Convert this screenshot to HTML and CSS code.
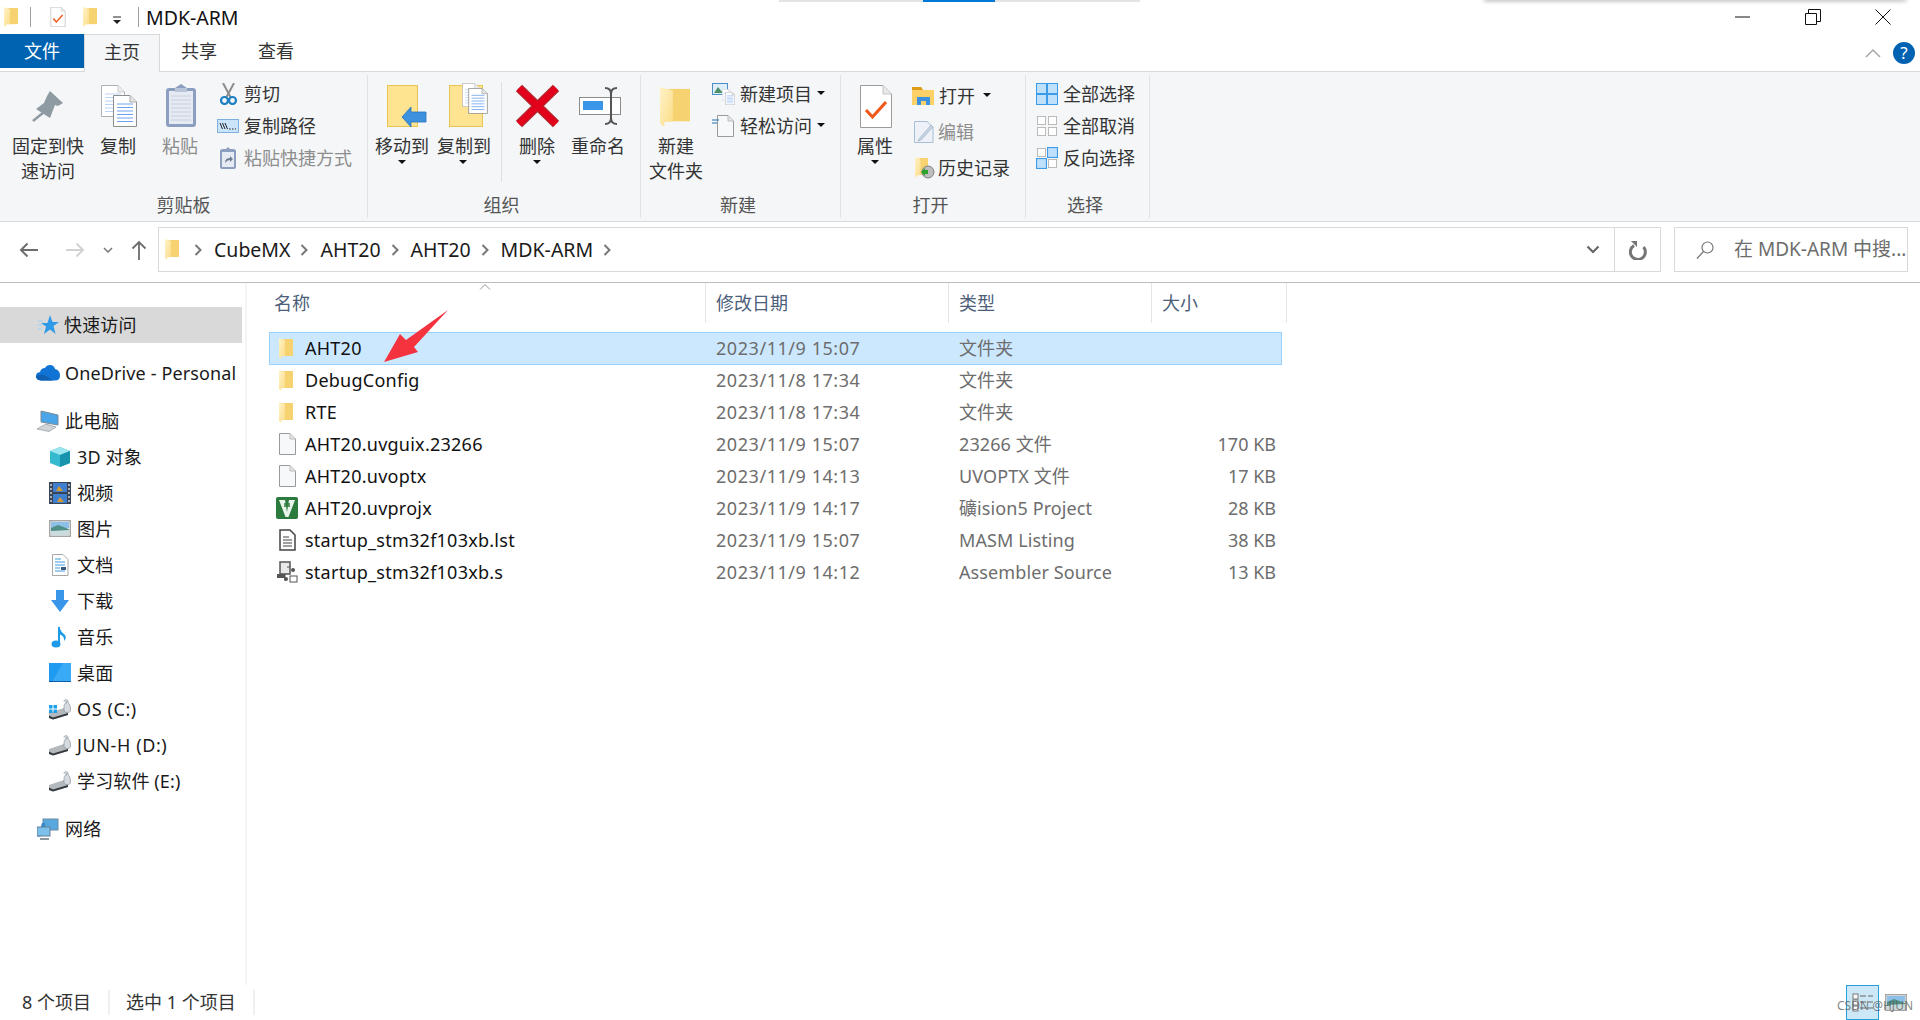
FILE: index.html
```html
<!DOCTYPE html>
<html lang="zh-CN">
<head>
    <meta charset="UTF-8">
    <title>MDK-ARM</title>
    <link rel="stylesheet" href="styles.css">
</head>
<body>
<svg class="defs" width="0" height="0">
    <defs>
        <linearGradient id="flap" x1="0" y1="0" x2="1" y2="1">
            <stop offset="0" stop-color="#fff3c8"/>
            <stop offset="1" stop-color="#fbdc86"/>
        </linearGradient>
        <symbol id="folder" viewBox="0 0 14 21" preserveAspectRatio="none">
            <path d="M4 1H14V18H4Z" fill="#f7d271"/>
            <path d="M0 0L6 2V18L2 18.5V21L0 19Z" fill="url(#flap)"/>
        </symbol>
        <symbol id="page" viewBox="0 0 18 22">
            <path d="M1.500 .5H12L17.500 6V21.500H1.500Z" fill="#f7f8f9" stroke="#9a9a9a"/>
            <path d="M12 .5V6H17.500" fill="#e4e4e4" stroke="#bdbdbd"/>
        </symbol>
        <symbol id="check-page" viewBox="0 0 32 43">
            <path d="M.5 .5H23L31.500 9V42.500H.5Z" fill="#fff" stroke="#9b9b9b"/>
            <path d="M23 .5V9H31.500" fill="#e9e9e9" stroke="#c4c4c4"/>
            <path d="M6 25L12.500 32L26 17" fill="none" stroke="#ef5a1c" stroke-width="3.200"/>
        </symbol>
        <symbol id="sheet" viewBox="0 0 24 32">
            <path d="M.5 .5H17L23.500 7V31.500H.5Z" fill="#fff" stroke="#8d8d8d"/>
            <path d="M17 .5V7H23.500" fill="#e6e6e6" stroke="#aaa"/>
            <path d="M4 9H20M4 12.500H20M4 16H20M4 19.500H20M4 23H20M4 26.500H20" stroke="#6ea2f0"/>
        </symbol>
        <symbol id="sheet-pale" viewBox="0 0 24 32">
            <path d="M.5 .5H17L23.500 7V31.500H.5Z" fill="#fff" stroke="#b0b0b0"/>
            <path d="M17 .5V7H23.500" fill="#eee" stroke="#ccc"/>
            <path d="M4 9H20M4 12.500H20M4 16H20M4 19.500H20M4 23H20M4 26.500H20" stroke="#bcd3f6"/>
        </symbol>
        <symbol id="drive" viewBox="0 0 22 22">
            <path d="M0 15L15 10L19 13V17L4 21.500L0 20Z" fill="#b4b9bd"/>
            <path d="M0 17.500L4 19.500L19 15V17L4 21.500L0 20Z" fill="#35393d"/>
            <path d="M15 3.500C15 1 19 1 19 3.500V5C21 6 21.500 8 21.500 13C20 15 16.500 15 15 13C15 8 15 6 16.500 5H17.500V3.500H16.500" fill="#d6dbe0" stroke="#8f98a0" stroke-width=".8"/>
        </symbol>
        <symbol id="tile-on" viewBox="0 0 10 10">
            <rect x=".5" y=".5" width="9" height="9" fill="#bfe0fb" stroke="#3c9be8"/>
        </symbol>
        <symbol id="tile-off" viewBox="0 0 10 10">
            <rect x=".5" y=".5" width="9" height="9" fill="#fff" stroke="#b4b4b4"/>
        </symbol>
        <symbol id="landscape" viewBox="0 0 22 17">
            <rect x=".75" y=".75" width="20.500" height="15.500" fill="#fff" stroke="#a6a6a6" stroke-width="1.500"/>
            <rect x="2" y="2" width="18" height="6" fill="#8cc0e8"/>
            <path d="M2 8L9 5L20 9V15H2Z" fill="#4f8f86"/>
            <path d="M2 11L20 10V15H2Z" fill="#c9dde0"/>
        </symbol>
    </defs>
</svg>

<div class="sliver"><span class="sliver-on"></span></div>
<div class="shadow"></div>

<header class="titlebar">
    <svg class="t-folder"><use href="#folder" width="14" height="20"/></svg>
    <i class="t-sep"></i>
    <svg class="t-check"><use href="#check-page" width="16" height="20"/></svg>
    <svg class="t-folder2"><use href="#folder" width="14" height="20"/></svg>
    <svg class="t-drop" viewBox="0 0 10 9"><path d="M1 1H9" stroke="#222"/><path d="M1 4H9L5 8Z" fill="#222"/></svg>
    <i class="t-sep t-sep2"></i>
    <span class="t-title">MDK-ARM</span>
    <div class="win-btns">
        <svg viewBox="0 0 16 16"><path d="M0 8H15" stroke="#111"/></svg>
        <svg viewBox="0 0 16 16"><path d="M.5 4.500H11.500V15.500H.5ZM3.500 4.500V.5H15.500V12.500H11.500" fill="none" stroke="#111"/></svg>
        <svg viewBox="0 0 16 16"><path d="M.5 .5L15.500 15.500M15.500 .5L.5 15.500" stroke="#111"/></svg>
    </div>
</header>

<nav class="tabs">
    <span class="tab tab-file">文件</span>
    <span class="tab tab-on">主页</span>
    <span class="tab tab-share">共享</span>
    <span class="tab tab-view">查看</span>
    <div class="tab-tools">
        <svg class="collapse" viewBox="0 0 16 10"><path d="M1 9L8 2L15 9" fill="none" stroke="#a9a9a9" stroke-width="1.500"/></svg>
        <span class="help">?</span>
    </div>
</nav>

<section class="ribbon">
    <div class="group g-clip">
        <div class="group-body">
            <div class="big w96">
                <svg class="big-ic" viewBox="0 0 48 48"><path d="M26 8L39 20L34 23L31 22L26 35L12 26L20 20L23 13Z" fill="#8f9ba3"/><path d="M20 29L9 38" stroke="#8f9ba3" stroke-width="2.500"/></svg>
                <span>固定到快<br>速访问</span>
            </div>
            <div class="big w44">
                <svg class="big-ic" viewBox="0 0 48 48"><use href="#sheet-pale" x="7" y="2" width="24" height="32"/><use href="#sheet" x="19" y="12" width="24" height="32"/></svg>
                <span>复制</span>
            </div>
            <div class="big w80 dim">
                <svg class="big-ic" viewBox="0 0 48 48"><path d="M19 5L25 1L31 5H37Q40 5 40 8V41Q40 44 37 44H13Q10 44 10 41V8Q10 5 13 5Z" fill="#8c9fc0"/><rect x="13" y="8" width="24" height="33" fill="#e6ebf3"/><path d="M15 13H35M15 17H35M15 21H35M15 25H35M15 29H35M15 33H35M15 37H35" stroke="#c6d0e0"/><path d="M19 5H31V9H19Z" fill="#b8c4d8"/></svg>
                <span>粘贴</span>
            </div>
            <div class="small-col col-clip">
                <div class="small"><svg class="small-ic" viewBox="0 0 26 22"><path d="M7 0L15 15M18 0L10 15" stroke="#8c8c8c" stroke-width="2"/><circle cx="8.500" cy="17.500" r="3.500" fill="none" stroke="#1b7fc4" stroke-width="2.200"/><circle cx="16.500" cy="17.500" r="3.500" fill="none" stroke="#1b7fc4" stroke-width="2.200"/></svg><span>剪切</span></div>
                <div class="small"><svg class="small-ic" viewBox="0 0 26 22"><rect x="1.500" y="4.500" width="21" height="13" fill="#c9e4fb" stroke="#7fb0dd"/><path d="M4 8L6.500 14M6.500 8L9 14M9 8L11.500 14" stroke="#222"/><path d="M13 14H20" stroke="#222" stroke-dasharray="1.500 1.500"/></svg><span>复制路径</span></div>
                <div class="small dim"><svg class="small-ic" viewBox="0 0 26 22"><path d="M7 2H10L12 0L14 2H17Q20 2 20 4V20Q20 22 18 22H6Q4 22 4 20V4Q4 2 7 2Z" fill="#8c9fc0"/><rect x="6" y="5" width="12" height="15" fill="#e6ebf3"/><path d="M9 16Q9 11 14 11V9L17 12L14 15V13Q11 13 9 16Z" fill="#6f7d90"/></svg><span>粘贴快捷方式</span></div>
            </div>
        </div>
        <div class="group-label first">剪贴板</div>
    </div>

    <div class="group g-org">
        <div class="group-body">
            <div class="big w68">
                <svg class="big-ic" viewBox="0 0 48 48"><rect x="9.500" y="2.500" width="30" height="41" fill="#fee391" stroke="#e9c455"/><path d="M24 34L33 24V29H48V39H33V44Z" fill="#3d92e0" stroke="#2a74b8" stroke-width=".8"/></svg>
                <span>移动到</span><i class="caret"></i>
            </div>
            <div class="big w54 shift1">
                <svg class="big-ic" viewBox="0 0 48 48"><rect x="10.500" y="2.500" width="33" height="41" fill="#fee391" stroke="#e9c455"/><use href="#sheet-pale" x="23" y="0" width="18" height="24"/><use href="#sheet" x="29" y="5" width="20" height="26"/></svg>
                <span>复制到</span><i class="caret"></i>
            </div>
            <i class="inner-sep"></i>
            <div class="big w70">
                <svg class="big-ic" viewBox="0 0 48 48"><path d="M6 5L43 41M43 5L6 41" stroke="#b3262d" stroke-width="9"/><path d="M6 5L43 41M43 5L6 41" stroke="#e2001a" stroke-width="6.500"/></svg>
                <span>删除</span><i class="caret"></i>
            </div>
            <div class="big w52">
                <svg class="big-ic" viewBox="0 0 48 48"><rect x="5.500" y="14.500" width="41" height="17" fill="#fff" stroke="#8c8c8c"/><rect x="9" y="18" width="20" height="9" fill="#3a96e8"/><path d="M31 5Q37 5 37 11V35Q37 41 31 41M43 5Q37 5 37 11V35Q37 41 43 41" fill="none" stroke="#555" stroke-width="2"/></svg>
                <span>重命名</span>
            </div>
        </div>
        <div class="group-label">组织</div>
    </div>

    <div class="group g-new">
        <div class="group-body">
            <div class="big w70">
                <svg class="big-ic" viewBox="0 0 48 48"><use href="#folder" x="8" y="4" width="30" height="40"/></svg>
                <span>新建<br>文件夹</span>
            </div>
            <div class="small-col col-new">
                <div class="small"><svg class="small-ic" viewBox="0 0 26 22"><rect x=".5" y=".5" width="15" height="11" fill="#dfeefb" stroke="#4c8fc9"/><path d="M2 10L6 4L11 10Z" fill="#4f8f6a"/><use href="#sheet-pale" x="10" y="6" width="9" height="12"/><use href="#sheet" x="13" y="9" width="10" height="13"/></svg><span>新建项目</span><i class="caret inline"></i></div>
                <div class="small"><svg class="small-ic" viewBox="0 0 26 22"><use href="#page" x="3" y="0" width="20" height="22"/><path d="M0 5H7M0 8H5" stroke="#1f6fb2"/></svg><span>轻松访问</span><i class="caret inline"></i></div>
            </div>
        </div>
        <div class="group-label">新建</div>
    </div>

    <div class="group g-open">
        <div class="group-body">
            <div class="big w68">
                <svg class="big-ic" viewBox="0 0 48 48"><use href="#check-page" x="9" y="2" width="32" height="43"/></svg>
                <span>属性</span><i class="caret"></i>
            </div>
            <div class="small-col col-open">
                <div class="small tall"><svg class="small-ic" viewBox="0 0 26 22"><path d="M1 2H10L12 5H23V20H1Z" fill="#fcd168"/><path d="M1 2H10L12 5H1Z" fill="#dd9b16"/><path d="M6 20V12H19V20H15V16H10V20Z" fill="#3d92e0"/></svg><span class="open-text">打开</span><i class="caret inline open-caret"></i></div>
                <div class="small tall dim"><svg class="small-ic" viewBox="0 0 26 22"><path d="M3.500 .5H16L22 6V21.500H3.500Z" fill="#eef2f8" stroke="#a9bdd6"/><path d="M8 18L20 4L22 6L10 19L7 20Z" fill="#c6d5e6" stroke="#9ab" stroke-width=".6"/></svg><span>编辑</span></div>
                <div class="small tall"><svg class="small-ic" viewBox="0 0 26 22"><use href="#folder" x="4" y="0" width="13" height="21"/><circle cx="17" cy="15" r="6" fill="#bdbdbd" stroke="#808080"/><path d="M10 15L14 11V13H17V17H14V19Z" fill="#2ea02e"/></svg><span>历史记录</span></div>
            </div>
        </div>
        <div class="group-label">打开</div>
    </div>

    <div class="group g-sel">
        <div class="group-body">
            <div class="small-col col-sel">
                <div class="small"><svg class="small-ic" viewBox="0 0 22 22"><rect x=".5" y=".5" width="21" height="21" fill="#bfe0fb" stroke="#3c9be8"/><path d="M11 1V21M1 11H21" stroke="#3c9be8" stroke-width="2"/></svg><span>全部选择</span></div>
                <div class="small"><svg class="small-ic" viewBox="0 0 22 22"><use href="#tile-off" x="1" y="1" width="9" height="9"/><use href="#tile-off" x="12" y="1" width="9" height="9"/><use href="#tile-off" x="1" y="12" width="9" height="9"/><use href="#tile-off" x="12" y="12" width="9" height="9"/></svg><span>全部取消</span></div>
                <div class="small"><svg class="small-ic" viewBox="0 0 22 22"><use href="#tile-off" x="1" y="1" width="9" height="9"/><use href="#tile-on" x="11" y="0" width="11" height="11"/><use href="#tile-on" x="0" y="11" width="11" height="11"/><use href="#tile-off" x="12" y="12" width="9" height="9"/></svg><span>反向选择</span></div>
            </div>
        </div>
        <div class="group-label">选择</div>
    </div>
</section>

<div class="addressbar">
    <div class="nav-btns">
        <svg class="nb-back" viewBox="0 0 20 16"><path d="M19 8H2M8.500 1.500L2 8L8.500 14.500" fill="none" stroke="#6d6d6d" stroke-width="2"/></svg>
        <svg class="nb-fwd" viewBox="0 0 20 16"><path d="M1 8H18M11.500 1.500L18 8L11.500 14.500" fill="none" stroke="#d2d2d2" stroke-width="2"/></svg>
        <svg class="nb-recent" viewBox="0 0 10 6"><path d="M1 1L5 5L9 1" fill="none" stroke="#777" stroke-width="1.500"/></svg>
        <svg class="nb-up" viewBox="0 0 16 20"><path d="M8 20V2M1.500 8.500L8 2L14.500 8.500" fill="none" stroke="#6d6d6d" stroke-width="1.800"/></svg>
    </div>
    <div class="pathbox">
        <svg class="crumb-folder"><use href="#folder" width="14" height="21"/></svg>
        <svg class="crumb-chev first" viewBox="0 0 8 12"><path d="M1.500 1L6.500 6L1.500 11" fill="none" stroke="#777" stroke-width="2"/></svg>
        <span class="crumb">CubeMX</span>
        <svg class="crumb-chev" viewBox="0 0 8 12"><path d="M1.500 1L6.500 6L1.500 11" fill="none" stroke="#777" stroke-width="2"/></svg>
        <span class="crumb">AHT20</span>
        <svg class="crumb-chev" viewBox="0 0 8 12"><path d="M1.500 1L6.500 6L1.500 11" fill="none" stroke="#777" stroke-width="2"/></svg>
        <span class="crumb">AHT20</span>
        <svg class="crumb-chev" viewBox="0 0 8 12"><path d="M1.500 1L6.500 6L1.500 11" fill="none" stroke="#777" stroke-width="2"/></svg>
        <span class="crumb">MDK-ARM</span>
        <svg class="crumb-chev" viewBox="0 0 8 12"><path d="M1.500 1L6.500 6L1.500 11" fill="none" stroke="#777" stroke-width="2"/></svg>
        <svg class="path-drop" viewBox="0 0 14 9"><path d="M1.500 1.500L7 7L12.500 1.500" fill="none" stroke="#666" stroke-width="2.200"/></svg>
        <div class="refresh"><svg viewBox="0 0 18 20"><path d="M5 4.500A7.500 7.500 0 1 0 14.500 6" fill="none" stroke="#757575" stroke-width="3" transform="translate(0 1)"/><path d="M2 1H8V7Z" fill="#757575"/></svg></div>
    </div>
    <div class="searchbox">
        <svg viewBox="0 0 18 18"><circle cx="11.500" cy="6.500" r="5.500" fill="none" stroke="#777" stroke-width="1.200"/><path d="M7.500 10.500L1 17.500" stroke="#777" stroke-width="1.300"/></svg>
        <span>在 MDK-ARM 中搜...</span>
    </div>
</div>

<main class="content">
    <aside class="sidebar">
        <div class="nav-row nav-on"><svg class="nav-ic" viewBox="0 0 22 22"><path d="M13 1L15.500 8H22L16.500 12L18.500 20L13 15.500L7 20L9 12.500L4 9H10.500Z" fill="#2f9ae8"/><path d="M1 7H6M0 11H5M1 15H5" stroke="#9fd0f4"/></svg><span>快速访问</span></div>
        <div class="nav-row nav-gap"><svg class="nav-ic cloud" viewBox="0 0 24 16"><path d="M5 15.500Q0 15 0 11Q0 7.500 4 7Q5 3 9 3Q10.500 0 14 0Q18 0 19 4Q24 5 24 10.500Q24 15.500 19 15.500Z" fill="#1173d4"/><path d="M5 15.500Q0 15 0 11Q4 9 8 10Q12 12 17 15.500Z" fill="#0f5fb2"/></svg><span>OneDrive - Personal</span></div>
        <div class="nav-row nav-gap"><svg class="nav-ic" viewBox="0 0 22 22"><path d="M4 1L21 5V15L4 12Z" fill="#49a5e8" stroke="#7f8a94"/><path d="M0 19L9 14L19 17L12 21.500Z" fill="#cfd4d8" stroke="#8f98a0" stroke-width=".7"/></svg><span>此电脑</span></div>
        <div class="nav-row nav-child"><svg class="nav-ic" viewBox="0 0 22 22"><path d="M11 1L21 5V17L11 21L1 17V5Z" fill="#35b9cf"/><path d="M11 9L21 5L11 1L1 5Z" fill="#9be6ef"/><path d="M11 9V21L21 17V5Z" fill="#1893ad"/></svg><span>3D 对象</span></div>
        <div class="nav-row nav-child"><svg class="nav-ic" viewBox="0 0 22 22"><rect width="22" height="22" fill="#3a4454"/><rect x="4" y="1" width="14" height="9" fill="#3f7fd0"/><rect x="4" y="12" width="14" height="9" fill="#3f7fd0"/><path d="M7 9L10 4L14 9ZM8 20L11 15L15 20Z" fill="#d49a30"/><path d="M2 2V21M20 2V21" stroke="#cfd4da" stroke-width="1.500" stroke-dasharray="2 2"/></svg><span>视频</span></div>
        <div class="nav-row nav-child"><svg class="nav-ic" viewBox="0 0 22 22"><use href="#landscape" x="0" y="2" width="22" height="17"/></svg><span>图片</span></div>
        <div class="nav-row nav-child"><svg class="nav-ic" viewBox="0 0 22 22"><path d="M3.500 .5H14L19 5.500V21.500H3.500Z" fill="#fff" stroke="#a8a8a8"/><path d="M6 5H12M6 8H16M6 11H16M6 14H11M6 17H16" stroke="#3f9be0"/><rect x="12" y="13" width="5" height="3" fill="#3a5a80"/></svg><span>文档</span></div>
        <div class="nav-row nav-child"><svg class="nav-ic" viewBox="0 0 22 22"><path d="M7 0H15V10H20L11 22L2 10H7Z" fill="#3a96e8"/></svg><span>下载</span></div>
        <div class="nav-row nav-child"><svg class="nav-ic" viewBox="0 0 22 22"><path d="M10 1V17" stroke="#1e9be8" stroke-width="2"/><ellipse cx="7" cy="18" rx="4.500" ry="3.500" fill="#1e9be8"/><path d="M10 1Q12 6 16 9Q18 12 15 15Q16 10 10 8Z" fill="#1e9be8"/></svg><span>音乐</span></div>
        <div class="nav-row nav-child"><svg class="nav-ic" viewBox="0 0 22 22"><rect x="0" y="1" width="22" height="19" fill="#1e9af0"/><path d="M14 1H22V20H3Z" fill="#39aaf5"/><path d="M0 19.500H22" stroke="#0b5fa8"/></svg><span>桌面</span></div>
        <div class="nav-row nav-child nav-drive"><svg class="nav-ic" viewBox="0 0 22 22"><use href="#drive" width="22" height="22"/><path d="M0 7H3.500V10.500H0ZM4.500 7H8V10.500H4.500ZM0 11.500H3.500V15H0ZM4.500 11.500H8V15H4.500Z" fill="#1ea0ee"/></svg><span>OS (C:)</span></div>
        <div class="nav-row nav-child nav-drive"><svg class="nav-ic" viewBox="0 0 22 22"><use href="#drive" width="22" height="22"/></svg><span>JUN-H (D:)</span></div>
        <div class="nav-row nav-child"><svg class="nav-ic" viewBox="0 0 22 22"><use href="#drive" width="22" height="22"/></svg><span>学习软件 (E:)</span></div>
        <div class="nav-row nav-gap"><svg class="nav-ic" viewBox="0 0 22 22"><rect x="6" y="1" width="15" height="11" fill="#58a8e0" stroke="#6f8ba0"/><path d="M1 19L5 5H8V17Z" fill="#3a86c4"/><rect x="0" y="9" width="13" height="9" fill="#7ec0ec" stroke="#5f7f98"/><path d="M3 21H12" stroke="#8f98a0" stroke-width="2"/></svg><span>网络</span></div>
    </aside>

    <section class="files">
        <div class="file-head">
            <div class="col-h col-name">名称<svg class="sort" viewBox="0 0 12 6"><path d="M1 5.500L6 .5L11 5.500" fill="none" stroke="#999"/></svg></div>
            <div class="col-h col-date">修改日期</div>
            <div class="col-h col-type">类型</div>
            <div class="col-h col-size">大小</div>
        </div>
        <div class="file-list">
            <div class="file-row selected">
                <div class="f-name"><svg class="f-folder"><use href="#folder" width="14" height="21"/></svg>AHT20</div>
                <div class="f-date">2023/11/9 15:07</div><div class="f-type">文件夹</div><div class="f-size"></div>
            </div>
            <div class="file-row">
                <div class="f-name"><svg class="f-folder"><use href="#folder" width="14" height="21"/></svg>DebugConfig</div>
                <div class="f-date">2023/11/8 17:34</div><div class="f-type">文件夹</div><div class="f-size"></div>
            </div>
            <div class="file-row">
                <div class="f-name"><svg class="f-folder"><use href="#folder" width="14" height="21"/></svg>RTE</div>
                <div class="f-date">2023/11/8 17:34</div><div class="f-type">文件夹</div><div class="f-size"></div>
            </div>
            <div class="file-row">
                <div class="f-name"><svg class="f-ic"><use href="#page" width="22" height="22"/></svg>AHT20.uvguix.23266</div>
                <div class="f-date">2023/11/9 15:07</div><div class="f-type">23266 文件</div><div class="f-size">170 KB</div>
            </div>
            <div class="file-row">
                <div class="f-name"><svg class="f-ic"><use href="#page" width="22" height="22"/></svg>AHT20.uvoptx</div>
                <div class="f-date">2023/11/9 14:13</div><div class="f-type">UVOPTX 文件</div><div class="f-size">17 KB</div>
            </div>
            <div class="file-row">
                <div class="f-name"><svg class="f-ic" viewBox="0 0 22 22"><rect width="22" height="22" rx="2" fill="#2b7a3e"/><path d="M3 3H9L11 15L13 3H19L12.500 20H9.500Z" fill="#e8f3ea"/><path d="M9 6V10M13 6V10" stroke="#2b7a3e" stroke-width="1.500"/></svg>AHT20.uvprojx</div>
                <div class="f-date">2023/11/9 14:17</div><div class="f-type">礦ision5 Project</div><div class="f-size">28 KB</div>
            </div>
            <div class="file-row">
                <div class="f-name"><svg class="f-ic" viewBox="0 0 22 22"><path d="M4 1H14L19 6V21H4Z" fill="#fff" stroke="#444" stroke-width="1.500"/><path d="M7 8H13M7 11H16M7 14H16M7 17H16" stroke="#444" stroke-width="1.200"/></svg>startup_stm32f103xb.lst</div>
                <div class="f-date">2023/11/9 15:07</div><div class="f-type">MASM Listing</div><div class="f-size">38 KB</div>
            </div>
            <div class="file-row">
                <div class="f-name"><svg class="f-ic" viewBox="0 0 22 22"><path d="M4 1H14V13H4Z" fill="#e9e9e9" stroke="#555" stroke-width="1.500"/><path d="M1 13H9V17H1Z" fill="#555"/><path d="M11 6H14M9 13V20" stroke="#555"/><circle cx="17" cy="9" r="2" fill="#555"/><rect x="14" y="15" width="7" height="6" fill="#fff" stroke="#555"/><circle cx="10" cy="18" r="2" fill="#555"/></svg>startup_stm32f103xb.s</div>
                <div class="f-date">2023/11/9 14:12</div><div class="f-type">Assembler Source</div><div class="f-size">13 KB</div>
            </div>
        </div>
    </section>
</main>

<footer class="statusbar">
    <span class="st-item">8 个项目</span>
    <span class="st-item">选中 1 个项目</span>
    <div class="view-btns">
        <div class="view-on"><svg viewBox="0 0 22 20"><rect x="1" y="1" width="5" height="5" fill="#fff" stroke="#777"/><rect x="1" y="7" width="5" height="5" fill="#fff" stroke="#777"/><rect x="1" y="13" width="5" height="5" fill="#fff" stroke="#777"/><path d="M8 3H14M16 3H21M8 9H14M16 9H21M8 15H14M16 15H21" stroke="#666"/></svg></div>
        <svg class="view-large"><use href="#landscape" width="22" height="17"/></svg>
    </div>
</footer>

<svg class="red-arrow" viewBox="0 0 70 56"><path d="M66 0L32 37L36 42L2 52L18 24L24 30Z" fill="#f5333f"/></svg>
<span class="watermark">CSDN @HJUN</span>
</body>
</html>
```

FILE: styles.css
```css
* {
    box-sizing: border-box;
}
html, body {
    margin: 0;
    height: 1020px;
    overflow: hidden;
    background: #fff;
}
body {
    position: relative;
    font-family: "Noto Sans", "Noto Sans CJK SC", sans-serif;
    font-size: 18px;
    line-height: 25px;
    color: #1a1a1a;
}
svg {
    display: block;
    flex: none;
}
.defs {
    position: absolute;
}
i {
    display: block;
    font-style: normal;
}

/* bits of other windows that peek in at the top */
.sliver {
    position: absolute;
    left: 779px;
    top: 0;
    width: 361px;
    height: 2px;
    background: #e3e3e3;
}
.sliver-on {
    display: block;
    width: 72px;
    height: 2px;
    margin-left: 144px;
    background: #0078d7;
}
.shadow {
    position: absolute;
    left: 1484px;
    top: -3px;
    width: 422px;
    height: 3px;
    box-shadow: 0 1px 4px rgba(0, 0, 0, .35);
}

/* title bar */
.titlebar {
    height: 34px;
    display: flex;
    align-items: center;
}
.t-folder {
    width: 14px;
    height: 20px;
    margin-left: 4px;
}
.t-sep {
    width: 1px;
    height: 20px;
    margin-left: 12px;
    background: #a0a0a0;
}
.t-check {
    width: 16px;
    height: 20px;
    margin-left: 19px;
}
.t-folder2 {
    width: 14px;
    height: 20px;
    margin-left: 17px;
}
.t-drop {
    width: 10px;
    height: 9px;
    margin-left: 15px;
    margin-top: 6px;
}
.t-sep2 {
    margin-left: 16px;
}
.t-title {
    margin-left: 7px;
    font-size: 19.500px;
    color: #111;
}
.win-btns {
    margin-left: auto;
    display: flex;
    gap: 54px;
    padding-right: 29px;
}
.win-btns svg {
    width: 16px;
    height: 16px;
}

/* tabs */
.tabs {
    height: 37px;
    display: flex;
    position: relative;
}
.tab {
    height: 34px;
    line-height: 35px;
    text-align: center;
    color: #333;
}
.tab-file {
    width: 84px;
    background: #0063b1;
    color: #fff;
}
.tab-on {
    width: 76px;
    height: 38px;
    background: #f4f6f8;
    border: 1px solid #d9d9d9;
    border-bottom: 0;
    z-index: 1;
}
.tab-share {
    width: 78px;
}
.tab-view {
    width: 76px;
}
.tab-tools {
    margin-left: auto;
    display: flex;
    align-items: center;
    gap: 12px;
    padding: 0 5px 0 0;
    height: 37px;
}
.collapse {
    width: 16px;
    height: 10px;
}
.help {
    width: 22px;
    height: 22px;
    border-radius: 50%;
    background: #0063b1;
    color: #fff;
    font-size: 17px;
    line-height: 22px;
    text-align: center;
}

/* ribbon */
.ribbon {
    height: 151px;
    display: flex;
    padding: 3px 0;
    background: #f4f6f8;
    border-top: 1px solid #d9d9d9;
    border-bottom: 1px solid #dadbdc;
}
.group {
    height: 143px;
    border-right: 1px solid #e0e2e4;
}
.g-clip { width: 368px; }
.g-org { width: 273px; }
.g-new { width: 200px; }
.g-open { width: 185px; }
.g-sel { width: 124px; }
.group-body {
    height: 118px;
    display: flex;
}
.group-label {
    text-align: center;
    color: #555;
    padding-right: 5px;
}
.group-label.first {
    padding-right: 0;
}
.big {
    display: flex;
    flex-direction: column;
    align-items: center;
    text-align: center;
    color: #333;
}
.big-ic {
    width: 48px;
    height: 48px;
    margin: 8px 0 3px;
    overflow: visible;
}
.w96 { width: 96px; }
.w44 { width: 44px; }
.w80 { width: 80px; }
.w68 { width: 68px; }
.w54 { width: 54px; }
.w70 { width: 70px; }
.w52 { width: 52px; }
.shift1 span {
    margin-left: 2px;
}
.big span {
    white-space: nowrap;
}
.dim {
    color: #8d8d8d;
}
.caret {
    width: 0;
    height: 0;
    border: 4px solid transparent;
    border-top-color: #111;
    border-bottom: 0;
    margin-top: 1px;
}
.caret.inline {
    margin-left: 5px;
    margin-top: -2px;
}
.caret.open-caret {
    margin-left: 8px;
}
.open-text {
    margin-left: 1px;
}
.inner-sep {
    width: 1px;
    height: 100px;
    margin: 7px 0 0 11px;
    background: #dfe1e3;
}
.small-col {
    padding-top: 3px;
}
.col-clip {
    margin-left: -4px;
}
.small {
    height: 32px;
    display: flex;
    align-items: center;
    color: #333;
    white-space: nowrap;
}
.small.dim {
    color: #8d8d8d;
}
.small.tall {
    height: 36px;
}
.small-ic {
    width: 26px;
    height: 22px;
    margin-right: 2px;
}
.col-new {
    padding-left: 1px;
}
.col-open {
    padding-left: 2px;
}
.col-open .small-ic {
    margin-right: 1px;
}
.col-sel {
    padding-left: 10px;
}
.col-sel .small-ic {
    width: 22px;
    margin-right: 5px;
}

/* address row */
.addressbar {
    height: 61px;
    display: flex;
    padding-top: 5px;
    border-bottom: 1px solid #bcbcbc;
}
.nav-btns {
    width: 158px;
    height: 45px;
    display: flex;
    align-items: center;
}
.nb-back {
    width: 20px;
    height: 16px;
    margin-left: 19px;
}
.nb-fwd {
    width: 20px;
    height: 16px;
    margin-left: 26px;
}
.nb-recent {
    width: 10px;
    height: 6px;
    margin-left: 18px;
}
.nb-up {
    width: 16px;
    height: 20px;
    margin-left: 18px;
}
.pathbox {
    width: 1503px;
    height: 45px;
    display: flex;
    align-items: center;
    border: 1px solid #d9d9d9;
    color: #1a1a1a;
}
.crumb {
    font-size: 19.500px;
}
.crumb-folder {
    width: 14px;
    height: 21px;
    margin-left: 6px;
}
.crumb-chev {
    width: 8px;
    height: 12px;
    margin: 0 12px 0 10px;
}
.crumb-chev.first {
    margin: 0 12px 0 15px;
}
.path-drop {
    width: 14px;
    height: 9px;
    margin-left: auto;
}
.refresh {
    width: 46px;
    height: 43px;
    margin-left: 14px;
    border-left: 1px solid #d9d9d9;
    display: flex;
    align-items: center;
    justify-content: center;
}
.refresh svg {
    width: 18px;
    height: 20px;
}
.searchbox {
    width: 234px;
    height: 45px;
    margin-left: 13px;
    display: flex;
    align-items: center;
    border: 1px solid #d9d9d9;
    color: #6d6d6d;
    font-size: 19px;
    white-space: nowrap;
}
.searchbox svg {
    width: 18px;
    height: 18px;
    margin: 0 20px 0 21px;
}

/* main area */
.content {
    height: 702px;
    display: flex;
}
.sidebar {
    width: 247px;
    padding-top: 24px;
    border-right: 2px solid #f5f5f5;
    color: #1a1a1a;
    letter-spacing: .13px;
}
.nav-row {
    height: 36px;
    margin-right: 3px;
    display: flex;
    align-items: center;
    padding-left: 37px;
    white-space: nowrap;
}
.nav-on {
    background: #d9d9d9;
}
.nav-on span {
    margin-left: -1px;
}
.nav-gap {
    margin-top: 12px;
}
.nav-child {
    padding-left: 49px;
}
.nav-drive {
    letter-spacing: .6px;
}
.nav-ic {
    width: 22px;
    height: 22px;
    margin-right: 6px;
}
.cloud {
    width: 24px;
    height: 16px;
    margin-left: -1px;
    margin-right: 5px;
}
.files {
    flex: 1;
    padding-left: 17px;
}
.file-head {
    display: flex;
    height: 40px;
    color: #4c607a;
}
.col-h {
    border-right: 1px solid #e5e5e5;
    padding-left: 10px;
    line-height: 40px;
}
.col-name {
    width: 442px;
    position: relative;
}
.sort {
    position: absolute;
    left: 215px;
    top: 1px;
    width: 12px;
    height: 6px;
}
.col-date {
    width: 243px;
}
.col-type {
    width: 203px;
}
.col-size {
    width: 135px;
}
.file-list {
    margin: 9px 0 0 5px;
}
.file-row {
    width: 1013px;
    height: 32px;
    display: grid;
    grid-template-columns: 437px 243px 203px 130px;
    align-items: center;
    color: #6d6d6d;
}
.selected {
    height: 33px;
    margin-bottom: -1px;
    background: #cce8ff;
    outline: 1px solid #99d1ff;
    outline-offset: -1px;
}
.f-name {
    display: flex;
    align-items: center;
    color: #111;
    padding-left: 7px;
    letter-spacing: .25px;
    white-space: nowrap;
}
.f-folder {
    width: 14px;
    height: 21px;
    margin: 0 12px 0 3px;
}
.f-ic {
    width: 22px;
    height: 22px;
    margin-right: 7px;
}
.f-date,
.f-type {
    padding-left: 10px;
    white-space: nowrap;
}
.f-date {
    letter-spacing: .55px;
}
.f-type {
    letter-spacing: .1px;
}
.f-size {
    text-align: right;
    padding-right: 6px;
}

/* status bar */
.statusbar {
    height: 35px;
    display: flex;
    align-items: center;
    padding-left: 22px;
    color: #333;
}
.st-item {
    padding-right: 17px;
    margin-right: 16px;
    border-right: 2px solid #f0f0f0;
    white-space: nowrap;
}
.view-btns {
    margin-left: auto;
    display: flex;
    align-items: center;
    gap: 6px;
    padding-right: 13px;
}
.view-on {
    width: 33px;
    height: 35px;
    background: #cce8f6;
    border: 1px solid #26a0da;
    display: flex;
    align-items: center;
    justify-content: center;
}
.view-on svg {
    width: 22px;
    height: 20px;
}
.view-large {
    width: 22px;
    height: 17px;
}

/* annotation drawn over the screenshot */
.red-arrow {
    position: absolute;
    left: 382px;
    top: 310px;
    width: 70px;
    height: 56px;
}
.watermark {
    position: absolute;
    left: 1837px;
    top: 998px;
    font-size: 12px;
    line-height: 16px;
    color: rgba(90, 90, 90, .75);
    white-space: nowrap;
}
```
